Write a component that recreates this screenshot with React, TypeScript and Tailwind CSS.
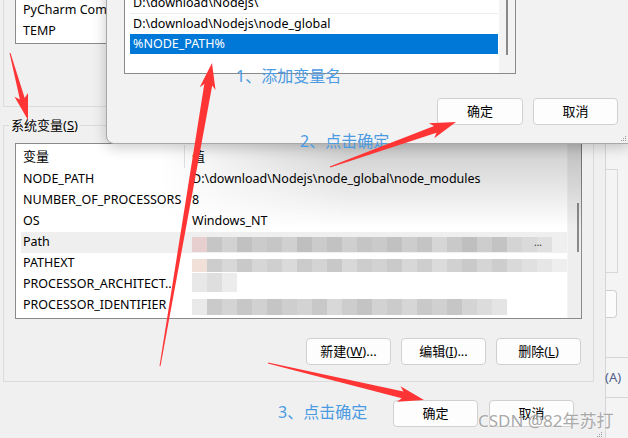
import React from "react";

const FONT = "font-['Noto_Sans','Noto_Sans_CJK_SC',sans-serif]";

function arrowPts(
  tx: number,
  ty: number,
  px: number,
  py: number,
  hl: number,
  hw: number,
  w0: number,
  w1: number
) {
  const dx = px - tx;
  const dy = py - ty;
  const L = Math.hypot(dx, dy);
  const ux = dx / L;
  const uy = dy / L;
  const nx = -uy;
  const ny = ux;
  const bx = px - ux * hl;
  const by = py - uy * hl;
  const cx = px - ux * (hl + 4);
  const cy = py - uy * (hl + 4);
  const pts = [
    [tx + (nx * w0) / 2, ty + (ny * w0) / 2],
    [bx + (nx * w1) / 2, by + (ny * w1) / 2],
    [cx + (nx * hw) / 2, cy + (ny * hw) / 2],
    [px, py],
    [cx - (nx * hw) / 2, cy - (ny * hw) / 2],
    [bx - (nx * w1) / 2, by - (ny * w1) / 2],
    [tx - (nx * w0) / 2, ty - (ny * w0) / 2],
  ];
  return pts.map((p) => p.map((v) => v.toFixed(1)).join(",")).join(" ");
}

function Btn({ children, w = "w-[85px]" }: { children: React.ReactNode; w?: string }) {
  return (
    <div
      className={`flex h-[27px] ${w} items-center justify-center rounded-[4px] border border-[#d0d0d0] bg-[#fdfdfd] text-[13px] text-black`}
    >
      {children}
    </div>
  );
}

function Mosaic({ colors, h, mt }: { colors: string[]; h: string; mt: string }) {
  return (
    <div className={`flex ${h} ${mt}`}>
      {colors.map((c, i) => (
        <div key={i} className={`h-full w-[15px] shrink-0 ${c}`} />
      ))}
    </div>
  );
}

const m1 = [
  "bg-[#e8cfcf]",
  "bg-[#c6c6c6]",
  "bg-[#d2d2d2]",
  "bg-[#c1c1c1]",
  "bg-[#cbcbcb]",
  "bg-[#c6c6c6]",
  "bg-[#d0d0d0]",
  "bg-[#bfbfbf]",
  "bg-[#cbcbcb]",
  "bg-[#c2c2c2]",
  "bg-[#cfcfcf]",
  "bg-[#c5c5c5]",
  "bg-[#cacaca]",
  "bg-[#c1c1c1]",
  "bg-[#cdcdcd]",
  "bg-[#c4c4c4]",
  "bg-[#d6d6d6]",
  "bg-[#c9c9c9]",
  "bg-[#bfbfbf]",
  "bg-[#cdcdcd]",
  "bg-[#c3c3c3]",
  "bg-[#d4d4d4]",
  "bg-[#dadada]",
  "bg-[#e0e0e0]",
];
const m2 = [
  "bg-[#f0e0d8]",
  "bg-[#cdcdcd]",
  "bg-[#d8d8d8]",
  "bg-[#c9c9c9]",
  "bg-[#d6d6d6]",
  "bg-[#cfcfcf]",
  "bg-[#dadada]",
  "bg-[#cbcbcb]",
  "bg-[#d4d4d4]",
  "bg-[#c8c8c8]",
  "bg-[#d8d8d8]",
  "bg-[#cdcdcd]",
  "bg-[#d2d2d2]",
  "bg-[#cacaca]",
  "bg-[#d7d7d7]",
  "bg-[#cecece]",
  "bg-[#dbdbdb]",
  "bg-[#d1d1d1]",
  "bg-[#c9c9c9]",
  "bg-[#d5d5d5]",
  "bg-[#cdcdcd]",
  "bg-[#d9d9d9]",
  "bg-[#e0e0e0]",
  "bg-[#e6e6e6]",
  "bg-[#eeeeee]",
];
const m3 = ["bg-[#e8e8e8]", "bg-[#dedede]", "bg-[#ececec]"];
const m4 = [
  "bg-[#e9e9e9]",
  "bg-[#cacaca]",
  "bg-[#d4d4d4]",
  "bg-[#c7c7c7]",
  "bg-[#d1d1d1]",
  "bg-[#c5c5c5]",
  "bg-[#cecece]",
  "bg-[#d3d3d3]",
  "bg-[#c8c8c8]",
  "bg-[#d8d8d8]",
  "bg-[#cdcdcd]",
  "bg-[#c4c4c4]",
  "bg-[#d2d2d2]",
  "bg-[#cbcbcb]",
  "bg-[#d6d6d6]",
  "bg-[#c9c9c9]",
  "bg-[#d0d0d0]",
  "bg-[#c6c6c6]",
  "bg-[#d4d4d4]",
  "bg-[#dcdcdc]",
  "bg-[#e4e4e4]",
];

function Grip() {
  return (
    <svg width="7" height="7" viewBox="0 0 7 7">
      <rect x="5" y="1" width="1" height="1" fill="#9a9a9a" />
      <rect x="3" y="3" width="1" height="1" fill="#9a9a9a" />
      <rect x="5" y="3" width="1" height="1" fill="#9a9a9a" />
      <rect x="1" y="5" width="1" height="1" fill="#9a9a9a" />
      <rect x="3" y="5" width="1" height="1" fill="#9a9a9a" />
      <rect x="5" y="5" width="1" height="1" fill="#9a9a9a" />
    </svg>
  );
}

export default function App() {
  const rows: { name: string; value: React.ReactNode; hl?: boolean }[] = [
    { name: "NODE_PATH", value: <span>{"D:\\download\\Nodejs\\node_global\\node_modules"}</span> },
    { name: "NUMBER_OF_PROCESSORS", value: <span>8</span> },
    { name: "OS", value: <span>Windows_NT</span> },
    {
      name: "Path",
      hl: true,
      value: (
        <div className="flex items-start">
          <Mosaic colors={m1} h="h-[15px]" mt="mt-[4px]" />
          <span className="ml-[-18px] mt-[4px] text-[10px] leading-[10px] text-[#333]">...</span>
        </div>
      ),
    },
    { name: "PATHEXT", value: <Mosaic colors={m2} h="h-[13px]" mt="mt-[3px]" /> },
    { name: "PROCESSOR_ARCHITECT...", value: <Mosaic colors={m3} h="h-[19px]" mt="mt-[-4px]" /> },
    { name: "PROCESSOR_IDENTIFIER", value: <Mosaic colors={m4} h="h-[16px]" mt="mt-[2px]" /> },
  ];

  return (
    <div className={`relative flex h-[438px] w-[628px] overflow-hidden bg-[#f0f0f0] text-black ${FONT}`}>
      {/* Main environment variables window */}
      <div className="flex w-[606px] shrink-0 flex-col border-r border-[#d6d6d6]">
        {/* User variables group (mostly hidden) */}
        <div className="ml-[3px] mt-[-12px] h-[119px] w-[591px] shrink-0 border-x border-b border-[#dcdcdc]">
          <div className="ml-[11px] h-[56px] w-[567px] border border-[#8a8a8a] bg-white pt-[11px]">
            <div className="flex h-[21px] items-center pl-[7px] text-[12.5px]">PyCharm Com</div>
            <div className="flex h-[21px] items-center pl-[7px] text-[12.5px]">TEMP</div>
          </div>
        </div>

        {/* System variables group */}
        <fieldset className="ml-[3px] mt-[9px] w-[591px] shrink-0 border border-[#dcdcdc]">
          <legend className="ml-[5px] px-[2px] text-[13px] leading-[18px]">
            系统变量(<span className="underline">S</span>)
          </legend>
          <div className="ml-[11px] mt-[9px] flex h-[176px] w-[567px] border border-[#8a8a8a] bg-white">
            <div className="flex flex-1 flex-col">
              <div className="ml-[5px] flex h-[25px] text-[13px]">
                <div className="my-[1px] flex w-[164px] items-center border-r border-[#e3e3e3] pl-[2px]">变量</div>
                <div className="flex items-center pl-[7px]">值</div>
              </div>
              {rows.map((r) => (
                <div
                  key={r.name}
                  className={`ml-[5px] flex h-[21px] text-[12.5px] ${r.hl ? "bg-[#efefef]" : ""}`}
                >
                  <div className="flex w-[164px] items-center overflow-hidden whitespace-nowrap pl-[2px]">
                    {r.name}
                  </div>
                  <div className="flex items-center pl-[7px] whitespace-nowrap">{r.value}</div>
                </div>
              ))}
            </div>
            <div className="flex w-[18px] flex-col border-l border-[#f4f4f4] bg-[#eeeeee]">
              <div className="ml-[9px] mt-[59px] h-[49px] w-[2px] bg-[#8a8a8a]" />
            </div>
          </div>
          <div className="mr-[12px] mt-[19px] flex justify-end gap-[10px] pb-[16px]">
            <Btn>
              新建(<span className="underline">W</span>)...
            </Btn>
            <Btn>
              编辑(<span className="underline">I</span>)...
            </Btn>
            <Btn>
              删除(<span className="underline">L</span>)
            </Btn>
          </div>
        </fieldset>

        {/* Bottom buttons */}
        <div className="mr-[31px] mt-[18px] flex justify-end gap-[11px]">
          <Btn>确定</Btn>
          <Btn>取消</Btn>
        </div>
        <div className="ml-auto mr-[2px] mt-auto">
          <Grip />
        </div>
      </div>

      {/* Window behind, right strip */}
      <div className="flex w-[22px] shrink-0 flex-col bg-[#f4f4f4]">
        <div className="mt-[169px] h-[104px] w-[12px] border-y border-r border-[#d8d8d8]" />
        <div className="mt-[17px] h-[28px] w-[11px] rounded-r-[4px] border-y border-r border-[#cfcfcf] bg-[#fbfbfb]" />
        <div className="mt-[39px] h-[1px] w-full bg-[#d6d6d6]" />
        <div className="mt-[11px] ml-[-1px] text-[13px] leading-[16px] text-[#52608a]">(A)</div>
        <div className="mt-[12px] h-[1px] w-full bg-[#d6d6d6]" />
      </div>

      {/* Dialog shadow on list */}
      <div className="pointer-events-none absolute left-[160px] top-[143px] h-[85px] w-[422px] bg-[linear-gradient(to_bottom,rgba(0,0,0,0.2),rgba(0,0,0,0))] [mask-image:linear-gradient(to_right,transparent,black_45%)]" />

      {/* Edit environment variable dialog */}
      <div className="absolute left-[106px] top-[-20px] flex h-[164px] w-[523px] flex-col rounded-bl-[8px] border border-[#a8a8a8] bg-[#f2f2f2] shadow-[0_3px_14px_rgba(0,0,0,0.22)]">
        <div className="ml-[17px] flex h-[93px] w-[392px] border border-[#8a8a8a] bg-white">
          <div className="flex flex-1 flex-col pl-[5px] pr-[1px] pt-[12px]">
            <div className="flex h-[20px] items-center border-b border-[#ececec] pl-[3px] text-[12.5px]">
              {"D:\\download\\Nodejs\\"}
            </div>
            <div className="flex h-[20px] items-center pl-[3px] text-[12.5px]">
              {"D:\\download\\Nodejs\\node_global"}
            </div>
            <div className="flex h-[20px] items-center bg-[#0078d7] pl-[3px] text-[12.5px] text-white">
              %NODE_PATH%
            </div>
          </div>
          <div className="flex w-[16px] flex-col bg-[#f3f3f3]">
            <div className="ml-[7px] h-[73px] w-[2px] bg-[#8a8a8a]" />
          </div>
        </div>
        <div className="mr-[10px] mt-[24px] flex justify-end gap-[10px]">
          <Btn w="w-[86px]">确定</Btn>
          <Btn>取消</Btn>
        </div>
        <div className="absolute bottom-[1px] right-[1px]">
          <Grip />
        </div>
      </div>

      {/* Annotation texts */}
      <div className="absolute left-[236px] top-[66px] text-[16px] leading-[20px] text-[#4a9be2]">1、添加变量名</div>
      <div className="absolute left-[300px] top-[131px] text-[16px] leading-[20px] text-[#4a9be2]">2、点击确定</div>
      <div className="absolute left-[278px] top-[402px] text-[16px] leading-[20px] text-[#4a9be2]">3、点击确定</div>

      {/* Red arrows */}
      <svg className="pointer-events-none absolute left-0 top-0" width="628" height="438" viewBox="0 0 628 438">
        <polygon points={arrowPts(10, 53, 28, 120, 22, 14, 1, 5)} fill="#ff3535" />
        <polygon points={arrowPts(160, 366, 212, 63, 22, 16, 1, 8)} fill="#ff3535" />
        <polygon points={arrowPts(330, 167, 456, 122, 22, 16, 1, 7)} fill="#ff3535" />
        <polygon points={arrowPts(268, 363, 424, 400, 22, 16, 1, 7)} fill="#ff3535" />
      </svg>

      {/* Watermark */}
      <div className="absolute left-[478px] top-[410px] text-[17px] leading-[22px] text-[#a9a9a9] [text-shadow:0_0_2px_#ffffff]">
        CSDN @82年苏打
      </div>
    </div>
  );
}
